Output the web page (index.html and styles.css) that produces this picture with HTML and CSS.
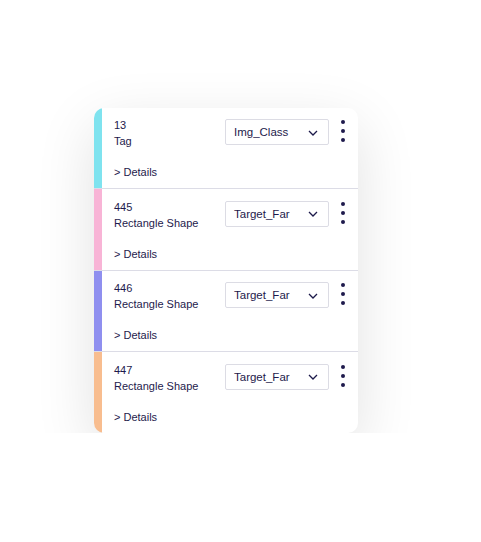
FILE: index.html
```html
<!DOCTYPE html>
<html>
<head>
<meta charset="utf-8">
<link rel="stylesheet" href="styles.css">
</head>
<body>
<div class="page">
  <div class="card">
    <div class="row">
      <div class="bar cyan"></div>
      <div class="body">
        <div class="top">
          <div class="labels"><div>13</div><div>Tag</div></div>
          <div class="select"><span>Img_Class</span><svg class="chev" width="10" height="6" viewBox="0 0 10 6"><path d="M1 1l4 4 4-4" fill="none" stroke="#1d1a4a" stroke-width="1.3"/></svg></div>
          <div class="kebab"><i></i><i></i><i></i></div>
        </div>
        <div class="details">&gt; Details</div>
      </div>
    </div>
    <div class="row">
      <div class="bar pink"></div>
      <div class="body">
        <div class="top">
          <div class="labels"><div>445</div><div>Rectangle Shape</div></div>
          <div class="select"><span>Target_Far</span><svg class="chev" width="10" height="6" viewBox="0 0 10 6"><path d="M1 1l4 4 4-4" fill="none" stroke="#1d1a4a" stroke-width="1.3"/></svg></div>
          <div class="kebab"><i></i><i></i><i></i></div>
        </div>
        <div class="details">&gt; Details</div>
      </div>
    </div>
    <div class="row">
      <div class="bar purple"></div>
      <div class="body">
        <div class="top">
          <div class="labels"><div>446</div><div>Rectangle Shape</div></div>
          <div class="select"><span>Target_Far</span><svg class="chev" width="10" height="6" viewBox="0 0 10 6"><path d="M1 1l4 4 4-4" fill="none" stroke="#1d1a4a" stroke-width="1.3"/></svg></div>
          <div class="kebab"><i></i><i></i><i></i></div>
        </div>
        <div class="details">&gt; Details</div>
      </div>
    </div>
    <div class="row last">
      <div class="bar orange"></div>
      <div class="body">
        <div class="top">
          <div class="labels"><div>447</div><div>Rectangle Shape</div></div>
          <div class="select"><span>Target_Far</span><svg class="chev" width="10" height="6" viewBox="0 0 10 6"><path d="M1 1l4 4 4-4" fill="none" stroke="#1d1a4a" stroke-width="1.3"/></svg></div>
          <div class="kebab"><i></i><i></i><i></i></div>
        </div>
        <div class="details">&gt; Details</div>
      </div>
    </div>
  </div>
</div>
</body>
</html>
```
FILE: styles.css
```css
html, body {
  margin: 0;
  padding: 0;
  background: #ffffff;
}
body {
  font-family: "Liberation Sans", Arial, sans-serif;
  font-size: 11px;
  color: #1e1a4c;
}
.page {
  padding: 107.5px 0 0 94px;
}
.card {
  width: 264px;
  background: #ffffff;
  border-radius: 10px;
  overflow: hidden;
  box-shadow: 0 18px 60px rgba(0, 0, 0, 0.12);
}
.row {
  display: flex;
  height: 80.5px;
  border-bottom: 1px solid #dcdce6;
}
.row.last {
  border-bottom: none;
}
.bar {
  width: 8px;
  flex: none;
}
.cyan { background: #7fe3ef; }
.pink { background: #f8b4d6; }
.purple { background: #8f8fef; }
.orange { background: #f8bd8f; }
.body {
  flex: 1;
  padding: 9.5px 0 0 12px;
}
.top {
  display: flex;
  align-items: flex-start;
}
.labels {
  flex: 1;
  line-height: 16px;
}
.select {
  margin-top: 2px;
  height: 24px;
  width: 84px;
  border: 1px solid #dcdce4;
  border-radius: 2px;
  display: flex;
  align-items: center;
  justify-content: space-between;
  padding: 0 10px 0 8px;
  font-size: 11.5px;
}
.chev {
  display: block;
  margin-top: 1px;
}
.kebab {
  width: 14px;
  margin: 0 8px 0 7px;
  padding-top: 3px;
  display: flex;
  flex-direction: column;
  align-items: center;
  gap: 5px;
}
.kebab i {
  display: block;
  width: 4px;
  height: 4px;
  border-radius: 50%;
  background: #1e1a4c;
}
.details {
  margin-top: 15px;
  line-height: 16px;
}
```
